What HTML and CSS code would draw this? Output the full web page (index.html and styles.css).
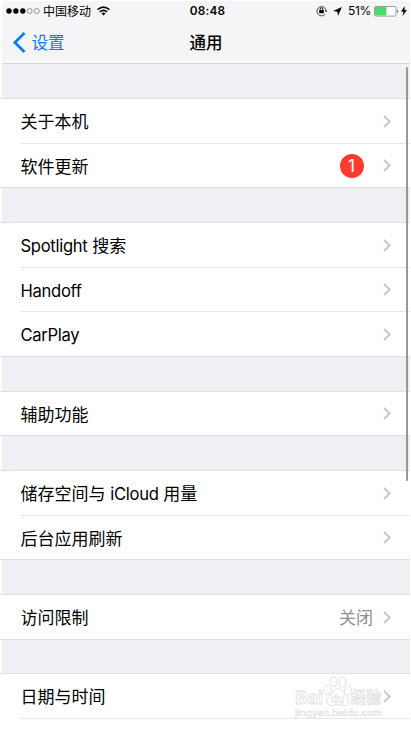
FILE: index.html
```html
<!DOCTYPE html>
<html lang="zh-CN">
<head>
<meta charset="utf-8">
<title>通用</title>
<link rel="stylesheet" href="styles.css">
</head>
<body>
<svg width="0" height="0" class="defs"><symbol id="chev" viewBox="0 0 8 13"><path d="M1 1l5.8 5.500L1 12" fill="none" stroke="#c3c3c8" stroke-width="1.8"/></symbol></svg>
<div class="screen">
  <header>
    <div class="status">
      <div class="carrier">
        <svg width="35" height="8" viewBox="0 0 35 8"><g fill="#000"><circle cx="3" cy="4" r="2.7"/><circle cx="9.9" cy="4" r="2.7"/><circle cx="16.8" cy="4" r="2.7"/></g><g fill="none" stroke="#555" stroke-width=".6"><circle cx="23.7" cy="4" r="2.5"/><circle cx="30.7" cy="4" r="2.5"/></g></svg>
        <span class="operator">中国移动</span>
        <svg class="wifi" width="13" height="10" viewBox="0 0 13 10"><g fill="none" stroke="#000" stroke-width="1.6"><path d="M.7 3.7Q6.5-1.6 12.3 3.7M2.8 6Q6.5 2.7 10.2 6"/></g><path d="M4.5 7.4Q6.5 5.8 8.5 7.4L6.5 9.5z"/></svg>
      </div>
      <div class="clock">08:48</div>
      <div class="indicators">
        <svg class="lock" width="12" height="12" viewBox="0 0 12 12"><path d="M9 9.300A4.600 4.600 0 1 1 10 5.200" fill="none" stroke="#222" stroke-width=".8"/><path d="M8.800 5.400h2.600l-1.300 1.800z"/><rect x="3.2" y="5.1" width="4.6" height="3.2" rx=".4"/><path d="M4.100 5.400V4.200a1.400 1.400 0 0 1 2.8 0v1.2" fill="none" stroke="#000" stroke-width=".9"/></svg>
        <svg class="arrow" width="9" height="9" viewBox="0 0 9 9"><path d="M8.9.1L5 8.900 4.400 4.700.1 4z"/></svg>
        <span class="percent">51%</span>
        <svg class="battery" width="25" height="11" viewBox="0 0 25 11"><rect x=".5" y=".5" width="21.5" height="9.6" rx="1.5" fill="#fff" stroke="#777" stroke-width=".7"/><rect x="1" y="1" width="11.4" height="8.6" rx=".8" fill="#4cd964"/><path d="M23 3.6q1.6 1.7 0 3.4z"/></svg>
        <svg class="bolt" width="6" height="10" viewBox="0 0 6 10"><path d="M3.8 0L0 5.6h2.4L1.5 10 6 4H3.5z"/></svg>
      </div>
    </div>
    <nav>
      <div class="back"><svg width="14" height="21" viewBox="0 0 14 21"><path d="M12.500 1L2.900 10.500 12.500 20" fill="none" stroke="#087cff" stroke-width="2.7"/></svg><span>设置</span></div>
      <h1>通用</h1>
    </nav>
  </header>
  <main>
    <section>
      <div class="row"><span>关于本机</span><svg class="chevron"><use href="#chev"/></svg></div>
      <div class="row"><span>软件更新</span><b class="badge">1</b><svg class="chevron"><use href="#chev"/></svg></div>
    </section>
    <section>
      <div class="row"><span><i>Spotlight</i> 搜索</span><svg class="chevron"><use href="#chev"/></svg></div>
      <div class="row"><span><i>Handoff</i></span><svg class="chevron"><use href="#chev"/></svg></div>
      <div class="row"><span><i>CarPlay</i></span><svg class="chevron"><use href="#chev"/></svg></div>
    </section>
    <section>
      <div class="row"><span>辅助功能</span><svg class="chevron"><use href="#chev"/></svg></div>
    </section>
    <section>
      <div class="row"><span>储存空间与 <i>iCloud</i> 用量</span><svg class="chevron"><use href="#chev"/></svg></div>
      <div class="row"><span>后台应用刷新</span><svg class="chevron"><use href="#chev"/></svg></div>
    </section>
    <section>
      <div class="row"><span>访问限制</span><em>关闭</em><svg class="chevron"><use href="#chev"/></svg></div>
    </section>
    <section class="last">
      <div class="row"><span>日期与时间</span><svg class="chevron"><use href="#chev"/></svg></div>
      <div class="row"></div>
    </section>
  </main>
  <div class="scrollbar"></div>
  <svg class="watermark" width="94" height="48" viewBox="0 0 94 48">
    <g fill="#fff" stroke="#e0e0e0" stroke-width="1">
      <ellipse cx="32.500" cy="16" rx="3.4" ry="4.500" transform="rotate(-15 32.500 16)"/><ellipse cx="38.500" cy="7.500" rx="3.500" ry="5"/><ellipse cx="47.500" cy="8" rx="3.500" ry="5"/><ellipse cx="53" cy="16.500" rx="3.400" ry="4.500" transform="rotate(15 53 16.500)"/>
      <path d="M43 14.500c4 0 5 4.500 8 7s5 9-1 10q-7-1.500-14 0c-6-1-5-7-1-10s4-7 8-7z"/>
    </g>
    <g class="mark"><text x="0" y="30" font-size="18" textLength="28" lengthAdjust="spacingAndGlyphs">Bai</text><text class="du" x="36" y="28.500" font-size="12" textLength="13" lengthAdjust="spacingAndGlyphs">du</text><text x="56" y="29" font-size="16" textLength="30" lengthAdjust="spacingAndGlyphs">经验</text></g>
    <text class="domain" x="0" y="42" textLength="87" lengthAdjust="spacingAndGlyphs">jingyan.baidu.com</text>
  </svg>
</div>
</body>
</html>
```
FILE: styles.css
```css
* { box-sizing: border-box; }
body { margin: 0; background: #fff; color: #000; font-family: Inter, "Noto Sans CJK SC", sans-serif; }
.defs { position: absolute; }
.screen { position: relative; width: 411px; height: 730px; overflow: hidden; padding: 1px 1px 0 2px; }
header { height: 63px; background: #f5f5f7; border-bottom: 1px solid #d6d6dc; }
.status { height: 20px; display: grid; grid-template-columns: 1fr 60px 1fr; align-items: center; font-size: 12px; line-height: 18px; }
.carrier, .indicators { display: flex; align-items: center; }
.carrier { padding-left: 4px; }
.operator { margin-left: 2px; white-space: nowrap; padding-top: 1px; }
.wifi { margin-left: 6px; }
.clock { text-align: center; padding-left: 3px; font-size: 11.800px; font-weight: 600; letter-spacing: .15px; }
.indicators { justify-content: flex-end; padding-right: 3px; }
.arrow { margin-left: 5.500px; }
.percent { margin-left: 6px; font-size: 12px; letter-spacing: -.35px; }
.battery { margin-left: 2.500px; }
.bolt { margin-left: 2.500px; }
nav { display: grid; grid-template-columns: 1fr auto 1fr; align-items: center; height: 42px; }
.back { display: flex; align-items: center; padding-left: 9.500px; color: #087cff; font-size: 16.500px; }
.back span { margin-left: 6px; line-height: 24px; padding-top: 1px; }
h1 { margin: 0; padding-top: 1px; font-size: 16.500px; line-height: 24px; font-weight: 500; }
main { background: #efeff4; padding-top: 34px; height: 666px; }
section { background: #fff; box-shadow: 0 -1px #e0e0e4, inset 0 -1px #e0e0e4; margin-bottom: 34.800px; margin-left: -2px; padding-left: 20px; }
section:first-child { margin-top: 1px; }
.row { height: 44.600px; display: flex; align-items: center; font-size: 17px; line-height: 24px; padding-right: 19px; padding-left: .5px; }
.row + .row { box-shadow: 0 -1px #e7e7ea; }
.row span { margin-right: auto; white-space: nowrap; padding-top: 1.500px; }
.row i { font-style: normal; font-size: 16.600px; letter-spacing: -.3px; }
.chevron { width: 8px; height: 13px; }
.badge { width: 24px; height: 24px; margin-right: 19.500px; border-radius: 50%; background: #ff3b30; color: #fff; text-align: center; font-size: 17px; font-weight: 400; line-height: 24px; }
.row em { font-style: normal; color: #8e8e93; margin-right: 10px; padding-top: 1.500px; }
.last { margin-bottom: 0; }
.scrollbar { position: absolute; left: 406px; top: 67px; width: 2px; height: 414px; border-radius: 1px; background: #98989c; }
.watermark { position: absolute; left: 295px; top: 674px; }
.mark { font-family: Inter, "Noto Sans CJK SC", sans-serif; font-weight: 700; fill: #fff; stroke: #dfdfdf; stroke-width: .8; }
.du { font-weight: 500; stroke-width: .6; }
.domain { font-family: Inter, sans-serif; font-size: 9px; fill: #fff; stroke: #e2e2e2; stroke-width: .55; }
```
